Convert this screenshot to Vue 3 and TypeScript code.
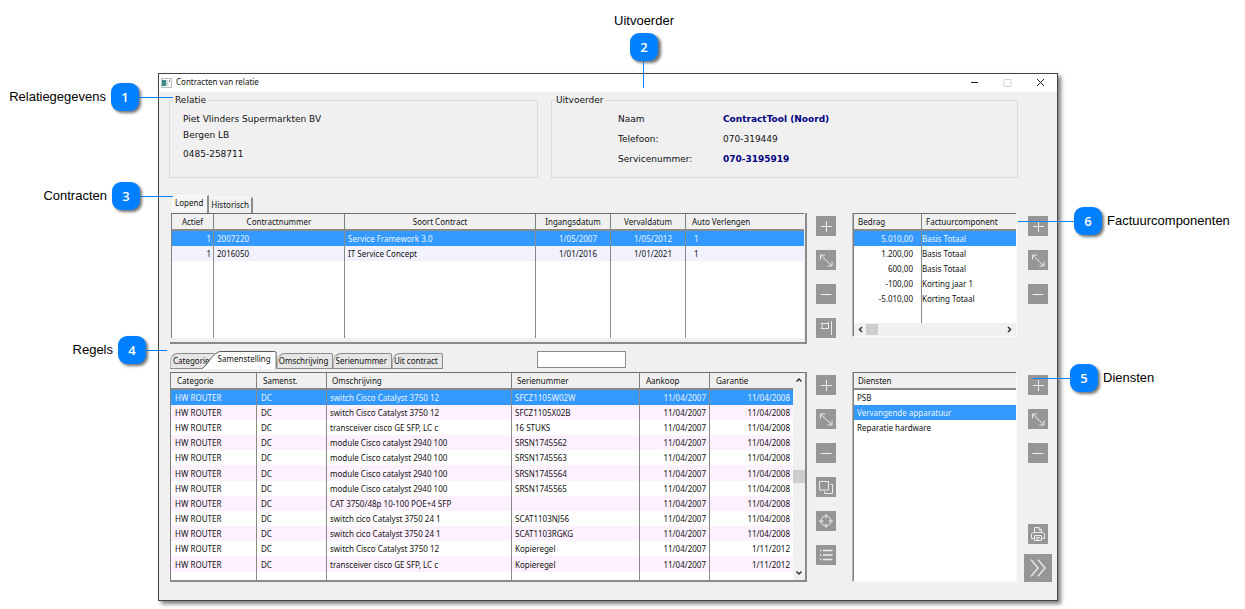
<script setup lang="ts">
import { ref } from 'vue'

type IconName = 'plus' | 'resize' | 'minus' | 'flag' | 'copy' | 'target' | 'list' | 'print' | 'next'

interface Action {
  icon: IconName
  label: string
}

const icons: Record<IconName, string[]> = {
  plus: ['M10.5 5v11', 'M5 10.5h11'],
  resize: ['M5 5.5l10.5 10', 'M4.5 9.5V5H9', 'M16 11.5V16h-4.5'],
  minus: ['M4.5 10.5h11'],
  flag: ['M15.5 3v14', 'M13 5.5H5l2 2.5-2 2.5h8', 'M12.5 4v7'],
  copy: ['M3.5 4.5h9v8.5h-9z', 'M14.5 7.5h2v9H8.5v-2'],
  target: ['M10 5a5 5 0 1 0 0 10a5 5 0 1 0 0-10', 'M10 3v4.5', 'M10 12.5v4.5', 'M3 10h4.5', 'M12.5 10h4.5'],
  list: ['M4 5.5h1.5', 'M7 5.5h9.5', 'M4 10h1.5', 'M7 10h9.5', 'M4 14.5h1.5', 'M7 14.5h9.5'],
  print: ['M6.5 8.5V3.5h4.5l2.5 2.5v2.5', 'M11 3.5v2.5h2.5', 'M6 14.5H3.5v-4.5L5 8.5h10l1.5 1.5v4.5H14', 'M6.5 11.5h7v5h-7z', 'M8 13.5h4', 'M8 15h3'],
  next: ['M5 4l5 6l-5 6', 'M10 4l5 6l-5 6'],
}

const basic: Action[] = [
  { icon: 'plus', label: 'Toevoegen' },
  { icon: 'resize', label: 'Wijzigen' },
  { icon: 'minus', label: 'Verwijderen' },
]
const contractActions: Action[] = [...basic, { icon: 'flag', label: 'Markeren' }]
const lineActions: Action[] = [
  ...basic,
  { icon: 'copy', label: 'Kopiëren' },
  { icon: 'target', label: 'Zoeken' },
  { icon: 'list', label: 'Lijst' },
]

const contracts = [
  ['1', '2007220', 'Service Framework 3.0', '1/05/2007', '1/05/2012', '1'],
  ['1', '2016050', 'IT Service Concept', '1/01/2016', '1/01/2021', '1'],
]
const components = [
  ['5.010,00', 'Basis Totaal'],
  ['1.200,00', 'Basis Totaal'],
  ['600,00', 'Basis Totaal'],
  ['-100,00', 'Korting jaar 1'],
  ['-5.010,00', 'Korting Totaal'],
]
const services = ['PSB', 'Vervangende apparatuur', 'Reparatie hardware']

const lineData: [string, string, string][] = [
  ['switch Cisco Catalyst 3750 12', 'SFCZ1105W02W', '11/04/2008'],
  ['switch Cisco Catalyst 3750 12', 'SFCZ1105X02B', '11/04/2008'],
  ['transceiver cisco GE SFP, LC c', '16 STUKS', '11/04/2008'],
  ['module Cisco catalyst 2940 100', 'SRSN1745562', '11/04/2008'],
  ['module Cisco catalyst 2940 100', 'SRSN1745563', '11/04/2008'],
  ['module Cisco catalyst 2940 100', 'SRSN1745564', '11/04/2008'],
  ['module Cisco catalyst 2940 100', 'SRSN1745565', '11/04/2008'],
  ['CAT 3750/48p 10-100 POE+4 SFP', '', '11/04/2008'],
  ['switch cico Catalyst 3750 24 1', 'SCAT1103NJ56', '11/04/2008'],
  ['switch cico Catalyst 3750 24 1', 'SCAT1103RGKG', '11/04/2008'],
  ['switch Cisco Catalyst 3750 12', 'Kopieregel', '1/11/2012'],
  ['transceiver cisco GE SFP, LC c', 'Kopieregel', '1/11/2012'],
]
const lines = lineData.map(([text, serial, warranty]) => ['HW ROUTER', 'DC', text, serial, '11/04/2007', warranty])

const periodTabs = ['Lopend', 'Historisch']
const lineTabs = ['Categorie', 'Samenstelling', 'Omschrijving', 'Serienummer', 'Uit contract']
const period = ref('Lopend')
const lineTab = ref('Samenstelling')
const contract = ref(0)
const line = ref(0)
const component = ref(0)
const service = ref(1)
const search = ref('')
</script>

<template>
  <div class="page">
    <div class="stage">
      <main class="window">
        <header class="titlebar">
          <svg class="app-icon" width="11" height="10" viewBox="0 0 11 10">
            <rect x="0.5" y="0.5" width="10" height="9" fill="#f4f6f6" stroke="#b9c0c2" />
            <rect x="1" y="2" width="4" height="6" fill="#3c8a86" />
            <rect x="5" y="2" width="2" height="6" fill="#cfd8dc" />
            <rect x="8" y="2" width="1" height="2" fill="#7b8d95" />
          </svg>
          <h1>Contracten van relatie</h1>
          <button type="button" class="control" aria-label="Minimaliseren">
            <svg width="11" height="11" viewBox="0 0 11 11"><path d="M2 5.5h7" stroke="#222" /></svg>
          </button>
          <button type="button" class="control" aria-label="Maximaliseren" disabled>
            <svg width="11" height="11" viewBox="0 0 11 11"><path d="M2 2.5h7v7h-7z" stroke="#d4d4d4" fill="none" /></svg>
          </button>
          <button type="button" class="control" aria-label="Sluiten">
            <svg width="11" height="11" viewBox="0 0 11 11"><path d="M2 2l7 7M9 2l-7 7" stroke="#222" /></svg>
          </button>
        </header>

        <div class="groups">
          <fieldset class="relation">
            <legend>Relatie</legend>
            <p>Piet Vlinders Supermarkten BV</p>
            <p>Bergen LB</p>
            <p class="phone">0485-258711</p>
          </fieldset>
          <fieldset class="executor">
            <legend>Uitvoerder</legend>
            <dl>
              <dt>Naam</dt><dd class="strong">ContractTool (Noord)</dd>
              <dt>Telefoon:</dt><dd>070-319449</dd>
              <dt>Servicenummer:</dt><dd class="strong">070-3195919</dd>
            </dl>
          </fieldset>
        </div>

        <div class="period-tabs" role="tablist">
          <button
            v-for="tab in periodTabs" :key="tab" type="button" role="tab"
            :aria-selected="period === tab" :class="{ active: period === tab }" @click="period = tab"
          >{{ tab }}</button>
        </div>

        <div class="row">
          <section class="panel contracts-panel">
            <table class="contracts">
              <colgroup><col class="w42"><col class="w131"><col><col class="w75"><col class="w75"><col class="w118"></colgroup>
              <thead>
                <tr><th>Actief</th><th>Contractnummer</th><th>Soort Contract</th><th>Ingangsdatum</th><th>Vervaldatum</th><th>Auto Verlengen</th></tr>
              </thead>
              <tbody>
                <tr v-for="(row, i) in contracts" :key="i" :class="{ selected: contract === i }" @click="contract = i">
                  <td v-for="(cell, c) in row" :key="c">{{ cell }}</td>
                </tr>
                <tr class="filler" aria-hidden="true"><td v-for="c in 6" :key="c"></td></tr>
              </tbody>
            </table>
          </section>
          <div class="actions">
            <button v-for="a in contractActions" :key="a.icon" type="button" class="action" :aria-label="a.label">
              <svg viewBox="0 0 20 20"><path v-for="d in icons[a.icon]" :key="d" :d="d" /></svg>
            </button>
          </div>
          <section class="side-panel">
            <table class="components">
              <colgroup><col class="w68"><col></colgroup>
              <thead><tr><th>Bedrag</th><th>Factuurcomponent</th></tr></thead>
              <tbody>
                <tr v-for="(row, i) in components" :key="i" :class="{ selected: component === i }" @click="component = i">
                  <td>{{ row[0] }}</td><td>{{ row[1] }}</td>
                </tr>
                <tr class="filler" aria-hidden="true"><td></td><td></td></tr>
              </tbody>
            </table>
            <div class="hscroll">
              <svg width="12" height="13" viewBox="0 0 12 13"><path d="M8 4l-2.5 2.5l2.5 2.5" /></svg>
              <span class="hthumb"></span>
              <svg class="end" width="12" height="13" viewBox="0 0 12 13"><path d="M4 4l2.5 2.5l-2.5 2.5" /></svg>
            </div>
          </section>
          <div class="actions side-actions">
            <button v-for="a in basic" :key="a.icon" type="button" class="action" :aria-label="a.label">
              <svg viewBox="0 0 20 20"><path v-for="d in icons[a.icon]" :key="d" :d="d" /></svg>
            </button>
          </div>
        </div>

        <div class="line-bar">
          <div class="line-tabs" role="tablist">
            <button
              v-for="tab in lineTabs" :key="tab" type="button" role="tab"
              :aria-selected="lineTab === tab" :class="{ active: lineTab === tab }" @click="lineTab = tab"
            >
              <svg v-if="lineTab === tab" class="tab-shape" viewBox="0 0 78 18" preserveAspectRatio="none">
                <path d="M0.5 18C7 14 11 4 17 1.5Q18 0.5 20 0.5H75.5Q77 0.5 77 2V18" fill="#fff" stroke="#555" />
              </svg>
              <span>{{ tab }}</span>
            </button>
          </div>
          <input v-model="search" type="text" aria-label="Zoeken">
        </div>

        <div class="row">
          <section class="panel lines-panel">
            <table class="lines">
              <colgroup><col class="w86"><col class="w70"><col><col class="w128"><col class="w70"><col class="w83"></colgroup>
              <thead>
                <tr><th>Categorie</th><th>Samenst.</th><th>Omschrijving</th><th>Serienummer</th><th>Aankoop</th><th>Garantie</th></tr>
              </thead>
              <tbody>
                <tr v-for="(row, i) in lines" :key="i" :class="{ selected: line === i }" @click="line = i">
                  <td v-for="(cell, c) in row" :key="c">{{ cell }}</td>
                </tr>
                <tr class="filler" aria-hidden="true"><td v-for="c in 6" :key="c"></td></tr>
              </tbody>
            </table>
            <div class="vscroll">
              <svg width="12" height="14" viewBox="0 0 12 14"><path d="M3.5 8.5l2.5-2.5l2.5 2.5" /></svg>
              <span class="vthumb"></span>
              <svg width="12" height="14" viewBox="0 0 12 14"><path d="M3.5 5.5l2.5 2.5l2.5-2.5" /></svg>
            </div>
          </section>
          <div class="actions">
            <button v-for="a in lineActions" :key="a.icon" type="button" class="action" :aria-label="a.label">
              <svg viewBox="0 0 20 20"><path v-for="d in icons[a.icon]" :key="d" :d="d" :class="{ bold: a.icon === 'list' }" /></svg>
            </button>
          </div>
          <section class="side-panel">
            <table class="services">
              <thead><tr><th>Diensten</th></tr></thead>
              <tbody>
                <tr v-for="(name, i) in services" :key="name" :class="{ selected: service === i }" @click="service = i">
                  <td>{{ name }}</td>
                </tr>
                <tr class="filler" aria-hidden="true"><td></td></tr>
              </tbody>
            </table>
          </section>
          <div class="actions side-actions">
            <button v-for="a in basic" :key="a.icon" type="button" class="action" :aria-label="a.label">
              <svg viewBox="0 0 20 20"><path v-for="d in icons[a.icon]" :key="d" :d="d" /></svg>
            </button>
            <div class="footer-actions">
              <button type="button" class="action" aria-label="Afdrukken">
                <svg viewBox="0 0 20 20"><path v-for="d in icons.print" :key="d" :d="d" /></svg>
              </button>
              <button type="button" class="action large" aria-label="Verder">
                <svg viewBox="0 0 20 20"><path v-for="d in icons.next" :key="d" :d="d" /></svg>
              </button>
            </div>
          </div>
        </div>
      </main>

      <div class="callout left c1"><span>Relatiegegevens</span><b>1</b><i></i></div>
      <div class="callout top"><span>Uitvoerder</span><b>2</b><i></i></div>
      <div class="callout left c3"><span>Contracten</span><b>3</b><i></i></div>
      <div class="callout left c4"><span>Regels</span><b>4</b><i></i></div>
      <div class="callout right c5"><i></i><b>5</b><span>Diensten</span></div>
      <div class="callout right c6"><i></i><b>6</b><span>Factuurcomponenten</span></div>
    </div>
  </div>
</template>

<style>
body {
  margin: 0;
  background: #fff;
}
</style>

<style scoped>
* {
  box-sizing: border-box;
}
.page {
  padding: 73px 187px 8px 158px;
  font-family: "Noto Sans", "Open Sans", sans-serif;
  font-size: 8px;
  line-height: 14px;
  color: #111;
}
.stage {
  position: relative;
}
button,
input {
  font: inherit;
  color: inherit;
  margin: 0;
  padding: 0;
  border: 0;
}
.window {
  min-width: 780px;
  padding-bottom: 18px;
  background: #f0f0f0;
  border: 1px solid #444;
  box-shadow: 3px 3px 4px rgba(0, 0, 0, 0.5);
}
.titlebar {
  display: flex;
  align-items: center;
  height: 18px;
  padding-left: 2px;
  background: #fff;
}
.titlebar h1 {
  flex: 1;
  margin: 0 0 0 4px;
  padding-bottom: 2px;
  font-size: 8px;
  font-weight: 400;
}
.control {
  display: grid;
  place-items: center;
  width: 33px;
  height: 18px;
  padding-bottom: 1px;
  background: none;
}
.groups {
  display: flex;
  gap: 13px;
  padding: 2px 39px 0 10px;
  font-family: "DejaVu Sans", Verdana, sans-serif;
  font-size: 9px;
}
fieldset {
  min-width: 0;
  height: 84px;
  margin: 0;
  border: 1px solid #dcdcdc;
}
legend {
  padding: 0 2px;
  line-height: 12px;
}
.relation {
  flex: 361;
  padding: 5px 3px 0;
}
.relation p {
  margin: 0;
  padding-left: 10px;
  line-height: 16px;
}
.relation .phone {
  margin-top: 3px;
}
.executor {
  flex: 461;
  padding: 3px 2px 0;
}
dl {
  display: grid;
  grid-template-columns: 105px 1fr;
  margin: 0;
  padding-left: 64px;
  line-height: 20px;
}
dd {
  margin: 0;
}
.strong {
  font-weight: 700;
  color: #000080;
}
.period-tabs {
  display: flex;
  align-items: flex-end;
  height: 35px;
  padding-left: 13px;
}
.period-tabs button {
  height: 16px;
  padding: 0 2px 1px;
  border-right: 2px solid #8c8c8c;
  border-top: 1px solid #fafafa;
  background: #f0f0f0;
}
.period-tabs .active {
  height: 18px;
  padding: 0 4px 3px 2px;
  border-left: 1px solid #fafafa;
  background: #f6f6f6;
}
.row {
  display: grid;
  grid-template-columns: minmax(0, 1fr) 45px 165px 36px;
  padding: 0 4px 0 11px;
}
.panel {
  border-right: 2px solid #8a8a8a;
  border-bottom: 2px solid #8a8a8a;
}
.contracts-panel {
  padding: 0 1px 4px 1px;
}
.lines-panel {
  display: flex;
}
table {
  width: 100%;
  table-layout: fixed;
  border-collapse: separate;
  border-spacing: 0;
  background: #fff;
  border-top: 1px solid #6e6e6e;
  border-left: 1px solid #808080;
}
.contracts {
  height: 125px;
}
.lines {
  flex: 1;
  width: auto;
  height: 208px;
}
.components {
  height: 110px;
}
.services {
  height: 209px;
}
.w42 { width: 42px; }
.w68 { width: 68px; }
.w70 { width: 70px; }
.w75 { width: 75px; }
.w83 { width: 83px; }
.w86 { width: 86px; }
.w118 { width: 118px; }
.w128 { width: 128px; }
.w131 { width: 131px; }
th {
  height: 17px;
  padding: 0 6px;
  font-weight: 400;
  text-align: left;
  white-space: nowrap;
  background: #f0f0f0;
  border-right: 1px solid #808080;
  border-bottom: 2px solid #8a8a8a;
}
.contracts th:not(:last-child) {
  text-align: center;
}
.lines th:nth-child(3),
.lines th:nth-child(4) {
  padding-left: 5px;
}
td {
  height: 15px;
  padding: 0 4px;
  line-height: 15px;
  white-space: nowrap;
  overflow: hidden;
  border-right: 1px solid #8a8a8a;
}
th:last-child,
td:last-child {
  border-right: 0;
}
.filler td {
  height: auto;
  padding: 0;
}
.contracts tr:nth-child(2) td {
  background: #f2f2ff;
}
.lines tr:nth-child(even) td {
  background: #fdf1ff;
}
.lines tr:nth-child(6n) td {
  height: 16px;
}
tbody .selected td,
.contracts tbody .selected td,
.lines tbody .selected td {
  background: #3399ff;
  color: #eaf4ff;
}
.contracts td {
  padding: 0 3px;
}
.contracts td:nth-child(4),
.contracts td:nth-child(5) {
  padding-right: 13px;
  text-align: right;
}
.contracts td:first-child {
  padding-right: 2px;
  text-align: right;
}
.contracts td:last-child {
  padding-left: 8px;
}
.lines td:nth-child(3),
.lines td:nth-child(4) {
  padding-left: 3px;
}
.lines td:nth-child(5),
.lines td:nth-child(6) {
  padding-right: 3px;
  text-align: right;
}
.components th,
.services th {
  padding: 0 4px;
}
.components td:first-child {
  padding-right: 8px;
  text-align: right;
}
.components td:last-child {
  padding-left: 0;
}
.services td {
  padding-left: 3px;
}
.side-panel {
  align-self: start;
  border-left: 1px solid #b0b0b0;
  border-right: 1px solid #fafafa;
  border-bottom: 1px solid #fafafa;
}
.hscroll {
  display: flex;
  height: 13px;
  border-left: 1px solid #808080;
  background: #f0f0f0;
}
.hthumb {
  width: 12px;
  height: 11px;
  margin-top: 1px;
  background: #cdcdcd;
}
.end {
  margin-left: auto;
}
.hscroll path,
.vscroll path {
  fill: none;
  stroke: #333;
  stroke-width: 1.5;
}
.vscroll {
  display: flex;
  flex-direction: column;
  align-items: center;
  width: 12px;
  border-top: 1px solid #6e6e6e;
  background: #f0f0f0;
}
.vthumb {
  width: 12px;
  height: 13px;
  margin: 83px 0 auto;
  background: #cdcdcd;
}
.actions {
  display: flex;
  flex-direction: column;
  align-items: center;
  gap: 14px;
  padding: 3px 8px 0 0;
}
.side-actions {
  padding: 3px 0 0 6px;
}
.action {
  flex: none;
  width: 20px;
  height: 20px;
  background: #969696;
}
.action svg {
  display: block;
  width: 100%;
  height: 100%;
}
.action path {
  fill: none;
  stroke: #ececec;
  stroke-width: 1;
}
.action .bold {
  stroke-width: 1.5;
}
.large {
  width: 28px;
  height: 28px;
}
.footer-actions {
  display: flex;
  flex-direction: column;
  align-items: center;
  gap: 10px;
  margin-top: auto;
}
.line-bar {
  display: flex;
  align-items: flex-start;
  height: 28px;
  padding: 7px 11px 0;
}
.line-tabs {
  display: flex;
  align-items: flex-end;
  height: 18px;
}
.line-tabs button {
  height: 16px;
  padding: 0 4px 0 1px;
  background: #e6e6e6;
  border: 1px solid #8a8a8a;
  border-left-color: #b4b4b4;
  border-radius: 8px 2px 0 0;
}
.line-tabs .active {
  position: relative;
  height: 18px;
  margin-left: -14px;
  padding: 0 6px 2px 17px;
  background: none;
  border: 0;
}
.line-tabs button:first-child {
  padding-left: 2px;
}
.line-tabs .active span {
  position: relative;
}
.tab-shape {
  position: absolute;
  inset: 0;
  width: 100%;
  height: 100%;
}
.line-bar input {
  width: 89px;
  height: 17px;
  margin-left: 94px;
  padding: 0 3px;
  background: #fff;
  border: 1px solid #8a8a8a;
}
.callout {
  position: absolute;
  display: flex;
  align-items: center;
  gap: 5px;
  font-family: "Liberation Sans", Arial, sans-serif;
  font-size: 13px;
  line-height: 16px;
  color: #000;
  pointer-events: none;
}
.callout b {
  width: 28px;
  height: 28px;
  border-radius: 9px;
  background: #0080ff;
  box-shadow: 2px 2px 3px rgba(0, 0, 0, 0.55);
  color: #fff;
  font-family: "Open Sans", sans-serif;
  font-weight: 600;
  line-height: 28px;
  text-align: center;
}
.callout i {
  width: 34px;
  height: 1px;
  background: #0080ff;
}
.left {
  right: calc(100% - 15px);
}
.left i {
  margin-left: -5px;
}
.right i {
  margin-right: -5px;
}
.c1 {
  top: 10px;
}
.c3 {
  top: 109px;
}
.c3 i {
  width: 33px;
}
.c4 {
  top: 263px;
  right: calc(100% - 9px);
}
.c4 i {
  width: 21px;
}
.c5 {
  top: 291px;
  left: calc(100% - 25px);
}
.c5 i {
  width: 37px;
}
.c6 {
  top: 134px;
  left: calc(100% - 40px);
}
.c6 i {
  width: 56px;
}
.top {
  top: -60px;
  left: 54%;
  flex-direction: column;
  gap: 4px;
  transform: translateX(-50%);
}
.top i {
  width: 1px;
  height: 27px;
  margin-top: -4px;
}
</style>
